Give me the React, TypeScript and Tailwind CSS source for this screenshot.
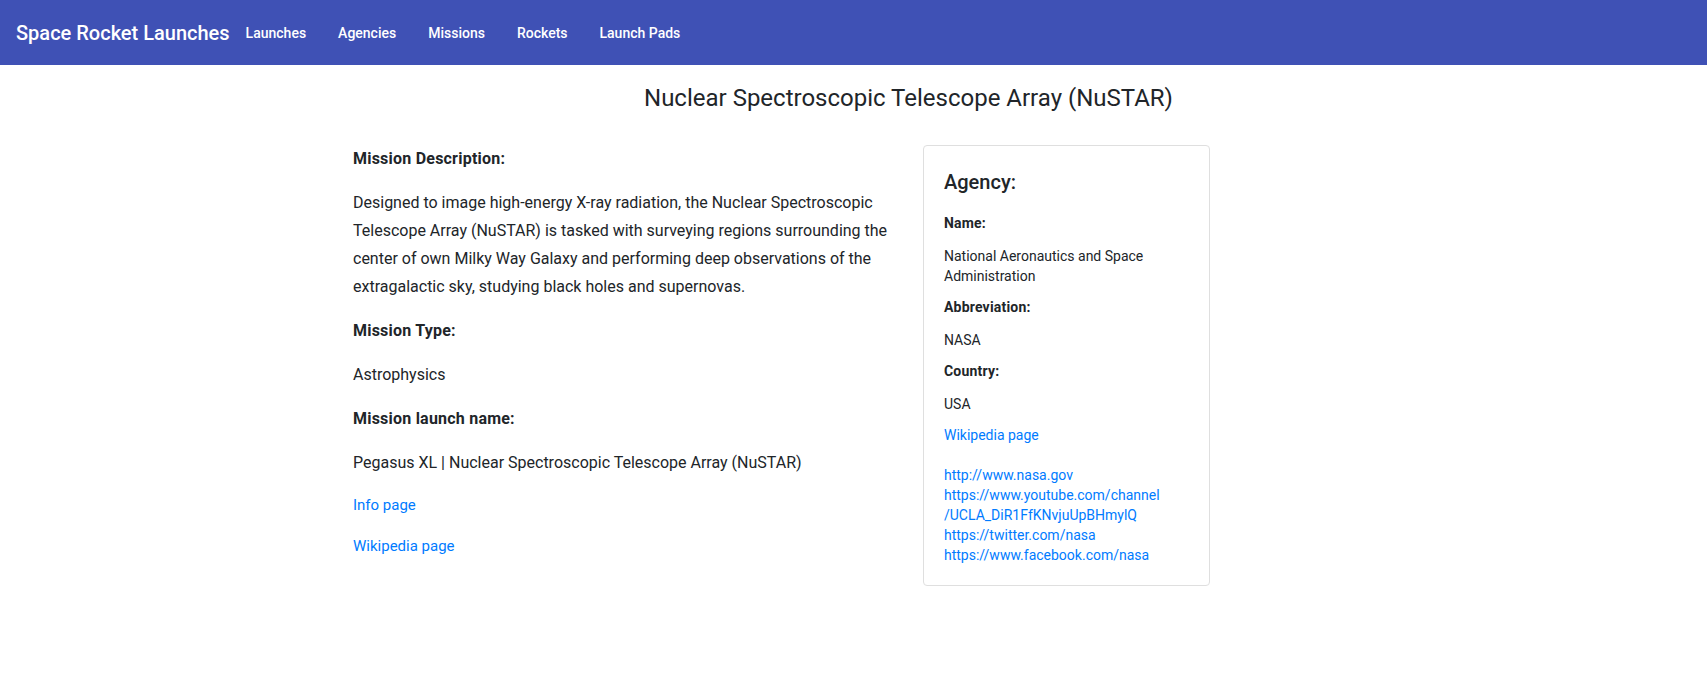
import React from "react";

const navItems = ["Launches", "Agencies", "Missions", "Rockets", "Launch Pads"];

const agencyLinks = [
  ["http://www.nasa.gov"],
  ["https://www.youtube.com/channel", "/UCLA_DiR1FfKNvjuUpBHmylQ"],
  ["https://twitter.com/nasa"],
  ["https://www.facebook.com/nasa"],
];

function NavBar() {
  return (
    <header className="h-[65px] bg-[#3f51b5] text-white flex items-center pl-4">
      <h6 className="text-[20px] font-medium leading-[32px]">Space Rocket Launches</h6>
      <nav className="flex">
        {navItems.map((item) => (
          <a key={item} href="#" className="px-4 py-1.5 text-[14px] font-medium leading-[24px]">
            {item}
          </a>
        ))}
      </nav>
    </header>
  );
}

function MissionDetails() {
  return (
    <div className="w-[555px] text-[16px] leading-[28px] text-[#212529]">
      <p className="font-bold tracking-[0.22px] mb-4">Mission Description:</p>
      <p className="mb-4">
        Designed to image high-energy X-ray radiation, the Nuclear Spectroscopic Telescope Array (NuSTAR) is tasked
        with surveying regions surrounding the center of own Milky Way Galaxy and performing deep observations of the
        extragalactic sky, studying black holes and supernovas.
      </p>
      <p className="font-bold tracking-[0.22px] mb-4">Mission Type:</p>
      <p className="mb-4">Astrophysics</p>
      <p className="font-bold tracking-[0.22px] mb-4">Mission launch name:</p>
      <p className="mb-4">Pegasus XL | Nuclear Spectroscopic Telescope Array (NuSTAR)</p>
      <p className="mb-4 text-[15px] leading-[24.5px]">
        <a href="#" className="text-[#007bff]">Info page</a>
      </p>
      <p className="mb-4 text-[15px] leading-[24.5px]">
        <a href="#" className="text-[#007bff]">Wikipedia page</a>
      </p>
    </div>
  );
}

function AgencyCard() {
  return (
    <div className="w-[287px] self-start border border-[#dfdfdf] rounded p-5 text-[14px] leading-[20px] text-[#212529]">
      <h5 className="text-[20px] font-medium leading-[32px] mb-[15px]">Agency:</h5>
      <p className="font-bold tracking-[0.2px] mb-[13px]">Name:</p>
      <p className="mb-[11px]">National Aeronautics and Space Administration</p>
      <p className="font-bold tracking-[0.2px] mb-[13px]">Abbreviation:</p>
      <p className="mb-[11px]">NASA</p>
      <p className="font-bold tracking-[0.2px] mb-[13px]">Country:</p>
      <p className="mb-[11px]">USA</p>
      <a href="#" className="block text-[#007bff] mb-5">Wikipedia page</a>
      <div className="flex flex-col">
        {agencyLinks.map((parts) => (
          <a key={parts[0]} href="#" className="text-[#007bff]">
            {parts.map((part, i) => (
              <React.Fragment key={part}>
                {i > 0 && <br />}
                {part}
              </React.Fragment>
            ))}
          </a>
        ))}
      </div>
    </div>
  );
}

export default function App() {
  return (
    <div className="min-h-screen bg-white font-['Roboto',sans-serif]">
      <NavBar />
      <h1 className="pl-[110px] mt-[19px] text-center text-[24px] leading-[29px] font-normal text-[#212529]">
        Nuclear Spectroscopic Telescope Array (NuSTAR)
      </h1>
      <div className="flex gap-[15px] pl-[353px] mt-[32px]">
        <MissionDetails />
        <AgencyCard />
      </div>
    </div>
  );
}
